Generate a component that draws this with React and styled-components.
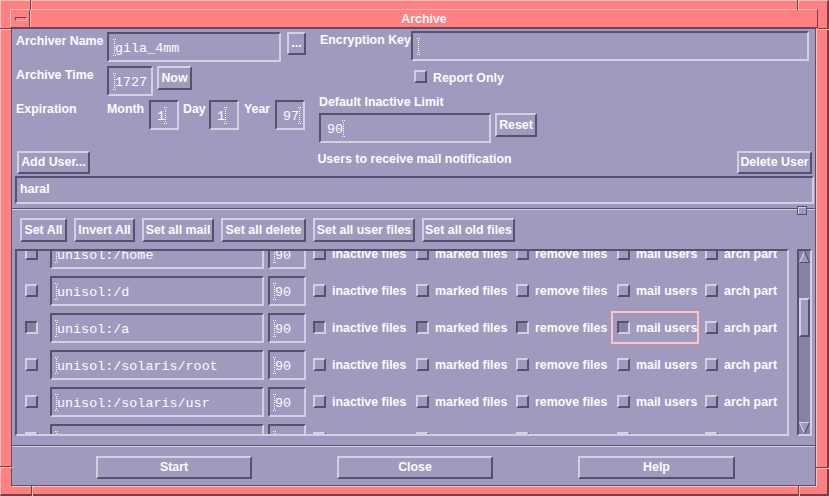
import React from 'react';
import styled, { createGlobalStyle, css } from 'styled-components';

const C = {
  bg: '#a09bbe',
  dark: '#56526e',
  light: '#d3d0e4',
  trough: '#8682a4',
  text: '#fbfbff',
  pink: '#ff8080',
  pinkLight: '#ffc0c0',
  pinkDark: '#7e3c48',
  focus: '#ffc4c4',
};

const GlobalStyle = createGlobalStyle`
  html, body { margin: 0; padding: 0; }
  body { width: 829px; height: 496px; overflow: hidden; background: ${C.pink}; }
  *, *::before, *::after { box-sizing: border-box; }
`;

const labelFont = css`
  font-family: "Liberation Sans", Arial, Helvetica, sans-serif;
  font-weight: bold;
  font-size: 12.4px;
  line-height: 15px;
  color: ${C.text};
  white-space: nowrap;
`;

const raised = css`
  border: 2px solid;
  border-color: ${C.light} ${C.dark} ${C.dark} ${C.light};
`;
const sunken = css`
  border: 2px solid;
  border-color: ${C.dark} ${C.light} ${C.light} ${C.dark};
`;

/* ---------- window frame ---------- */
const Frame = styled.div`
  position: relative;
  width: 829px;
  height: 496px;
  display: flex;
  flex-direction: column;
  padding: 8px 9px 8px 9px;
  background: ${C.pink};
  border-style: solid;
  border-width: 1px 2px 2px 1px;
  border-color: ${C.pinkLight} ${C.pinkDark} ${C.pinkDark} ${C.pinkLight};
`;

const Notch = styled.span`
  position: absolute;
  left: ${p => p.$x}px;
  top: ${p => p.$y}px;
  width: ${p => (p.$vertical ? 1 : p.$len)}px;
  height: ${p => (p.$vertical ? p.$len : 1)}px;
  background: ${C.pinkDark};
  box-shadow: ${p => (p.$vertical ? `1px 0 0 ${C.pinkLight}` : `0 1px 0 ${C.pinkLight}`)};
`;

const TitleBar = styled.div`
  height: 19px;
  flex: none;
  display: flex;
  border-style: solid;
  border-width: 1px;
  border-color: ${C.pinkLight} ${C.pinkDark} ${C.pinkDark} ${C.pinkLight};
`;

const MenuBox = styled.div`
  width: 19px;
  flex: none;
  display: flex;
  align-items: center;
  justify-content: center;
  padding-left: 1px;
  border-right: 1px solid ${C.pinkDark};
  box-shadow: 1px 0 0 ${C.pinkLight};
`;

const MenuBar = styled.span`
  display: block;
  width: 12px;
  height: 4px;
  border: 1px solid;
  border-color: ${C.pinkDark} ${C.pinkLight} ${C.pinkLight} ${C.pinkDark};
  background: ${C.pink};
`;

const TitleText = styled.div`
  flex: 1;
  text-align: center;
  ${labelFont}
  line-height: 15px;
  padding: 2px 0 0 1px;
`;

const Client = styled.div`
  flex: 1;
  min-height: 0;
  margin: 0 2px 0 1px;
  border: 1px solid ${C.dark};
  box-shadow: 1px 1px 0 ${C.pinkLight};
  background: ${C.bg};
  display: flex;
  flex-direction: column;
`;

/* ---------- form parts ---------- */
const TopForm = styled.div`
  display: grid;
  grid-template-columns: 303px 1fr;
  padding: 0 6px 0 4px;
`;

const Column = styled.div`
  display: flex;
  flex-direction: column;
  padding-top: ${p => p.$pt || 0}px;
  gap: ${p => p.$gap || 0}px;
`;

const FormRow = styled.div`
  display: flex;
  align-items: flex-start;
  margin-top: ${p => p.$mt || 0}px;
`;

const Label = styled.span`
  ${labelFont}
  flex: none;
  width: ${p => (p.$w ? `${p.$w}px` : 'auto')};
  margin-top: ${p => (p.$mt === undefined ? 2 : p.$mt)}px;
  margin-left: ${p => p.$ml || 0}px;
  padding-left: ${p => p.$pl || 0}px;
`;

const Field = styled.div`
  ${sunken}
  flex: ${p => (p.$w ? 'none' : '1')};
  width: ${p => (p.$w ? `${p.$w}px` : 'auto')};
  height: 30px;
  margin-left: ${p => p.$ml || 0}px;
  margin-top: ${p => p.$mt || 0}px;
  padding-left: ${p => (p.$pl === undefined ? 6 : p.$pl)}px;
  padding-top: 2px;
  display: flex;
  align-items: center;
  overflow: hidden;
  font-family: "Liberation Mono", "Courier New", monospace;
  font-size: 13.4px;
  color: ${C.text};
  white-space: pre;
`;

const CaretGlyph = styled.svg`
  flex: none;
  display: block;
  margin: -2px ${p => p.$mr}px 0 ${p => p.$ml}px;
`;

function Caret({ after }) {
  const dots = [];
  for (let y = 2; y <= 14; y += 2) dots.push(<rect key={y} x="2" y={y} width="1" height="1" />);
  return (
    <CaretGlyph
      width="5"
      height="17"
      viewBox="0 0 5 17"
      fill={C.text}
      $ml={after ? -2 : -3}
      $mr={after ? -3 : -2}
    >
      <rect x="1" y="0" width="1" height="1" />
      <rect x="3" y="0" width="1" height="1" />
      {dots}
      <rect x="1" y="16" width="1" height="1" />
      <rect x="3" y="16" width="1" height="1" />
    </CaretGlyph>
  );
}

function TextField({ value = '', caretAfter, ...rest }) {
  return (
    <Field {...rest}>
      {!caretAfter && <Caret />}
      <span>{value}</span>
      {caretAfter && <Caret after />}
    </Field>
  );
}

const PushButton = styled.button`
  ${raised}
  flex: none;
  width: ${p => p.$w}px;
  height: ${p => p.$h || 24}px;
  margin: ${p => p.$mt || 0}px 0 0 ${p => p.$ml || 0}px;
  padding: 0;
  background: ${C.bg};
  ${labelFont}
  line-height: 1;
  display: flex;
  align-items: center;
  justify-content: center;
  justify-self: ${p => (p.$end ? 'end' : 'start')};
  cursor: default;
`;

const Toggle = styled.label`
  ${labelFont}
  flex: none;
  align-self: flex-start;
  display: flex;
  align-items: center;
  gap: 6px;
  width: ${p => (p.$w ? `${p.$w}px` : 'auto')};
  height: ${p => p.$h || 33}px;
  margin-top: ${p => p.$mt || 0}px;
  margin-left: ${p => p.$ml || 0}px;
  padding-left: 4px;
  padding-right: 2px;
  border: 2px solid ${p => (p.$focus ? C.focus : 'transparent')};
`;

const ToggleText = styled.span`
  padding-top: ${p => p.$pt || 2}px;
`;

const CheckBox = styled.span`
  display: block;
  flex: none;
  width: 13px;
  height: 13px;
  margin-top: ${p => p.$mt || 0}px;
  border: 2px solid;
  border-color: ${p =>
    p.$set
      ? `${C.dark} ${C.light} ${C.light} ${C.dark}`
      : `${C.light} ${C.dark} ${C.dark} ${C.light}`};
  background: ${p => (p.$set ? C.trough : C.bg)};
`;

const MailRow = styled.div`
  display: grid;
  grid-template-columns: 1fr auto 1fr;
  align-items: start;
  margin-top: 8px;
  padding: 0 3px 0 5px;
`;

const UsersList = styled.div`
  ${sunken}
  ${labelFont}
  height: 28px;
  margin: 2px 1px 0 3px;
  padding: 4px 0 0 3px;
`;

const PaneSeparator = styled.div`
  position: relative;
  flex: none;
  margin-top: 4px;
  height: 2px;
  border-top: 1px solid ${C.dark};
  border-bottom: 1px solid ${C.light};
`;

const Sash = styled.span`
  position: absolute;
  left: 785px;
  top: -3px;
  width: 10px;
  height: 9px;
  background: ${C.bg};
  border: 1px solid ${C.dark};
  box-shadow: inset 1px 1px 0 ${C.light};
`;

const ActionBar = styled.div`
  display: flex;
  gap: 7px;
  padding-left: 8px;
  margin-top: 8px;
`;

/* ---------- scrolled list ---------- */
const ScrollArea = styled.div`
  display: flex;
  gap: 8px;
  flex: none;
  height: 187px;
  padding: 0 3px;
  margin-top: 7px;
`;

const ScrollFrame = styled.div`
  ${sunken}
  width: 774px;
  height: 100%;
  overflow: hidden;
`;

const ScrollContent = styled.div`
  margin-top: ${p => -p.$offset}px;
`;

const FsRow = styled.div`
  display: flex;
  align-items: flex-start;
  height: 37px;
  padding-left: 8px;
`;

const ScrollBar = styled.div`
  ${sunken}
  width: 15px;
  height: 100%;
  background: ${C.trough};
  display: flex;
  flex-direction: column;
`;

const Track = styled.div`
  flex: 1;
`;

const Thumb = styled.div`
  ${raised}
  height: 39px;
  margin-top: ${p => p.$offset}px;
  background: ${C.bg};
`;

const Arrow = styled.svg`
  display: block;
  flex: none;
`;

function ArrowUp() {
  return (
    <Arrow width="11" height="12" viewBox="0 0 11 12">
      <polygon points="5.5,0.5 0.5,11.5 10.5,11.5" fill={C.bg} />
      <polyline points="0.5,11.5 5.5,0.5" stroke={C.light} strokeWidth="1.2" fill="none" />
      <polyline points="5.5,0.5 10.5,11.5 0.5,11.5" stroke={C.dark} strokeWidth="1.2" fill="none" />
    </Arrow>
  );
}

function ArrowDown() {
  return (
    <Arrow width="11" height="12" viewBox="0 0 11 12">
      <polygon points="0.5,0.5 10.5,0.5 5.5,11.5" fill={C.bg} />
      <polyline points="5.5,11.5 0.5,0.5 10.5,0.5" stroke={C.light} strokeWidth="1.2" fill="none" />
      <polyline points="10.5,0.5 5.5,11.5" stroke={C.dark} strokeWidth="1.2" fill="none" />
    </Arrow>
  );
}

const BottomSep = styled.div`
  flex: none;
  margin-top: 9px;
  height: 2px;
  border-top: 1px solid ${C.dark};
  border-bottom: 1px solid ${C.light};
`;

const BottomBar = styled.div`
  display: flex;
  gap: 85px;
  padding-left: 84px;
  margin-top: 9px;
`;

/* ---------- data ---------- */
const OPTIONS = [
  { key: 'inactive', label: 'inactive files', w: 103 },
  { key: 'marked', label: 'marked files', w: 100 },
  { key: 'remove', label: 'remove files', w: 101 },
  { key: 'mail', label: 'mail users', w: 88 },
  { key: 'arch', label: 'arch part' },
];

const FILESYSTEMS = [
  { path: 'unisol:/home' },
  { path: 'unisol:/d' },
  { path: 'unisol:/a', selected: true, on: ['inactive', 'marked', 'remove', 'mail'], focus: 'mail' },
  { path: 'unisol:/solaris/root' },
  { path: 'unisol:/solaris/usr' },
  { path: 'unisol:/solaris/opt' },
];

const ACTIONS = [
  { label: 'Set All', w: 47 },
  { label: 'Invert All', w: 61 },
  { label: 'Set all mail', w: 72 },
  { label: 'Set all delete', w: 85 },
  { label: 'Set all user files', w: 102 },
  { label: 'Set all old files', w: 93 },
];

export default function App() {
  return (
    <>
      <GlobalStyle />
      <Frame>
        <Notch $vertical $x={29} $y={-1} $len={10} />
        <Notch $x={-1} $y={27} $len={11} />
        <Notch $vertical $x={796} $y={-1} $len={10} />
        <Notch $x={817} $y={27} $len={11} />
        <Notch $vertical $x={30} $y={485} $len={10} />
        <Notch $x={-1} $y={465} $len={12} />
        <Notch $vertical $x={797} $y={485} $len={10} />
        <Notch $x={815} $y={466} $len={14} />

        <TitleBar>
          <MenuBox>
            <MenuBar />
          </MenuBox>
          <TitleText>Archive</TitleText>
        </TitleBar>

        <Client>
          <TopForm>
            <Column $pt={3} $gap={4}>
              <FormRow>
                <Label $w={91}>Archiver Name</Label>
                <TextField $w={174} value="gila_4mm" />
                <PushButton $w={19} $h={23} $ml={6}>...</PushButton>
              </FormRow>
              <FormRow>
                <Label $w={91}>Archive Time</Label>
                <TextField $w={46} value="1727" />
                <PushButton $w={35} $ml={4}>Now</PushButton>
              </FormRow>
              <FormRow>
                <Label $w={91}>Expiration</Label>
                <Label $w={42}>Month</Label>
                <TextField $w={30} value="1" caretAfter />
                <Label $w={26} $ml={4}>Day</Label>
                <TextField $w={30} value="1" caretAfter />
                <Label $w={31} $ml={5}>Year</Label>
                <TextField $w={30} value="97" caretAfter />
              </FormRow>
            </Column>

            <Column $pt={2}>
              <FormRow>
                <Label $w={92} $pl={1}>Encryption Key</Label>
                <TextField />
              </FormRow>
              <Toggle $h={17} $mt={7} $ml={89}>
                <CheckBox />
                <ToggleText $pt={3}>Report Only</ToggleText>
              </Toggle>
              <Label $mt={10}>Default Inactive Limit</Label>
              <FormRow $mt={3}>
                <TextField $w={172} value="90" caretAfter />
                <PushButton $w={42} $ml={4}>Reset</PushButton>
              </FormRow>
            </Column>
          </TopForm>

          <MailRow>
            <PushButton $w={73} $h={23}>Add User...</PushButton>
            <Label $mt={1}>Users to receive mail notification</Label>
            <PushButton $w={75} $h={23} $end>Delete User</PushButton>
          </MailRow>

          <UsersList>haral</UsersList>

          <PaneSeparator>
            <Sash />
          </PaneSeparator>

          <ActionBar>
            {ACTIONS.map(a => (
              <PushButton key={a.label} $w={a.w}>{a.label}</PushButton>
            ))}
          </ActionBar>

          <ScrollArea>
            <ScrollFrame>
              <ScrollContent $offset={16}>
                {FILESYSTEMS.map(fs => (
                  <FsRow key={fs.path}>
                    <CheckBox $mt={12} $set={fs.selected} />
                    <TextField $w={214} $ml={12} $mt={4} $pl={5} value={fs.path} />
                    <TextField $w={38} $ml={4} $mt={4} $pl={5} value="90" />
                    {OPTIONS.map((o, i) => (
                      <Toggle
                        key={o.key}
                        $w={o.w}
                        $mt={2}
                        $ml={i === 0 ? 1 : 0}
                        $focus={fs.focus === o.key}
                      >
                        <CheckBox $set={fs.on && fs.on.includes(o.key)} />
                        <ToggleText>{o.label}</ToggleText>
                      </Toggle>
                    ))}
                  </FsRow>
                ))}
              </ScrollContent>
            </ScrollFrame>
            <ScrollBar>
              <ArrowUp />
              <Track>
                <Thumb $offset={35} />
              </Track>
              <ArrowDown />
            </ScrollBar>
          </ScrollArea>

          <BottomSep />

          <BottomBar>
            <PushButton $w={156} $h={23}>Start</PushButton>
            <PushButton $w={156} $h={23}>Close</PushButton>
            <PushButton $w={157} $h={23}>Help</PushButton>
          </BottomBar>
        </Client>
      </Frame>
    </>
  );
}
